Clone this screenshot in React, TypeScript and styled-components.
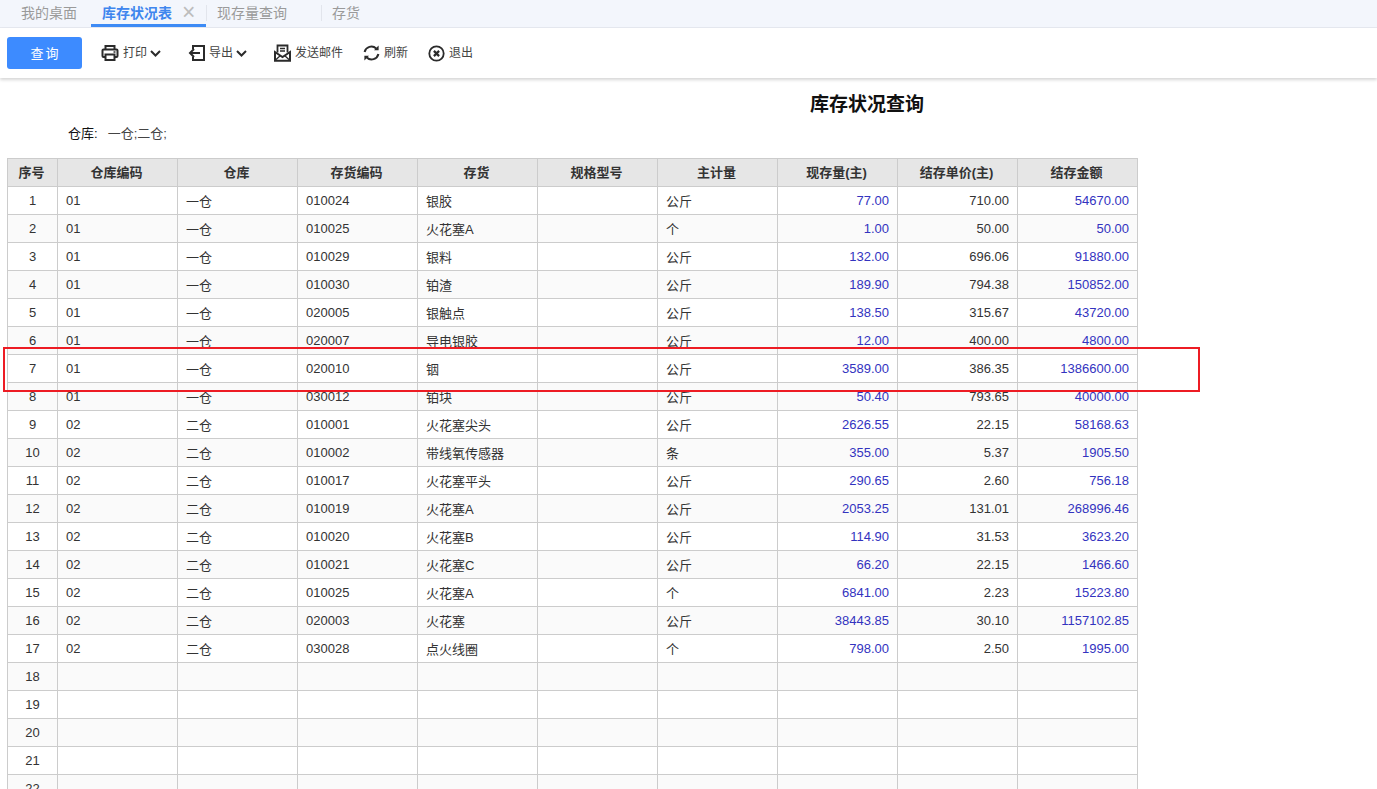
import React from "react";
import styled, { createGlobalStyle } from "styled-components";

const GlobalStyle = createGlobalStyle`
  html, body {
    margin: 0;
    padding: 0;
    height: 789px;
    overflow: hidden;
    background: #ffffff;
    font-family: "Liberation Sans", "Noto Sans CJK SC", sans-serif;
  }
`;

const columns = ["序号", "仓库编码", "仓库", "存货编码", "存货", "规格型号", "主计量", "现存量(主)", "结存单价(主)", "结存金额"];

const rows = [
  ["01", "一仓", "010024", "银胶", "公斤", "77.00", "710.00", "54670.00"],
  ["01", "一仓", "010025", "火花塞A", "个", "1.00", "50.00", "50.00"],
  ["01", "一仓", "010029", "银料", "公斤", "132.00", "696.06", "91880.00"],
  ["01", "一仓", "010030", "铂渣", "公斤", "189.90", "794.38", "150852.00"],
  ["01", "一仓", "020005", "银触点", "公斤", "138.50", "315.67", "43720.00"],
  ["01", "一仓", "020007", "导电银胶", "公斤", "12.00", "400.00", "4800.00"],
  ["01", "一仓", "020010", "铟", "公斤", "3589.00", "386.35", "1386600.00"],
  ["01", "一仓", "030012", "铂块", "公斤", "50.40", "793.65", "40000.00"],
  ["02", "二仓", "010001", "火花塞尖头", "公斤", "2626.55", "22.15", "58168.63"],
  ["02", "二仓", "010002", "带线氧传感器", "条", "355.00", "5.37", "1905.50"],
  ["02", "二仓", "010017", "火花塞平头", "公斤", "290.65", "2.60", "756.18"],
  ["02", "二仓", "010019", "火花塞A", "公斤", "2053.25", "131.01", "268996.46"],
  ["02", "二仓", "010020", "火花塞B", "公斤", "114.90", "31.53", "3623.20"],
  ["02", "二仓", "010021", "火花塞C", "公斤", "66.20", "22.15", "1466.60"],
  ["02", "二仓", "010025", "火花塞A", "个", "6841.00", "2.23", "15223.80"],
  ["02", "二仓", "020003", "火花塞", "公斤", "38443.85", "30.10", "1157102.85"],
  ["02", "二仓", "030028", "点火线圈", "个", "798.00", "2.50", "1995.00"],
];

const PrintIcon = () => (
  <svg width="18" height="18" viewBox="0 0 18 18" fill="none" stroke="#2b2b2b" strokeWidth="2">
    <path d="M4.5 5V2h9v3" />
    <path d="M4 13H2.5a1 1 0 0 1-1-1V6.5a1 1 0 0 1 1-1h13a1 1 0 0 1 1 1V12a1 1 0 0 1-1 1H14" />
    <path d="M4.5 10.5h9V16h-9z" />
    <path d="M12.5 8h2" strokeWidth="1.5" />
  </svg>
);

const ExportIcon = () => (
  <svg width="18" height="18" viewBox="0 0 18 18" fill="none" stroke="#2b2b2b" strokeWidth="2">
    <path d="M5 5V2h11v14H5v-3" />
    <path d="M12 9H2" />
    <path d="M6 5L2 9l4 4" />
  </svg>
);

const MailIcon = () => (
  <svg width="17" height="18" viewBox="0 0 17 18" fill="none" stroke="#2b2b2b" strokeWidth="2">
    <path d="M3.5 8.5V1.5h10v7" strokeWidth="1.8" />
    <path d="M6 4.5h5M6 7h5" strokeWidth="1.3" />
    <path d="M1 8v8.8h15V8l-7.5 5z" />
    <path d="M1.5 16l5-4.5M15.5 16l-5-4.5" strokeWidth="1.3" />
  </svg>
);

const RefreshIcon = () => (
  <svg width="17" height="18" viewBox="0 0 17 18" fill="none" stroke="#2b2b2b" strokeWidth="2">
    <path d="M1.6 8a7 7 0 0 1 11.6-3.6" />
    <path d="M15.4 10a7 7 0 0 1-11.6 3.6" />
    <path d="M15.6 1.6v4.6H11z" fill="#2b2b2b" stroke="none" />
    <path d="M1.4 16.4v-4.6H6z" fill="#2b2b2b" stroke="none" />
  </svg>
);

const ExitIcon = () => (
  <svg width="17" height="17" viewBox="0 0 17 17" fill="none" stroke="#2b2b2b">
    <circle cx="8.5" cy="8.5" r="7.2" strokeWidth="1.8" />
    <path d="M5.9 5.9l5.2 5.2M11.1 5.9l-5.2 5.2" strokeWidth="2.2" />
  </svg>
);

const Chevron = () => (
  <svg width="11" height="7" viewBox="0 0 11 7" fill="none" stroke="#2b2b2b" strokeWidth="2">
    <path d="M1 1l4.5 4.5L10 1" />
  </svg>
);

function App() {
  return (
    <Page>
      <GlobalStyle />
      <TabBar>
        <Tab $width={91}>我的桌面</Tab>
        <Tab $width={115} $active>
          库存状况表
          <CloseMark>×</CloseMark>
        </Tab>
        <Tab $width={115} $divider>现存量查询</Tab>
        <Tab $width={60} $divider>存货</Tab>
      </TabBar>
      <Toolbar>
        <QueryButton>查询</QueryButton>
        <ToolItem $width={87}>
          <PrintIcon />
          <ToolLabel>打印</ToolLabel>
          <Chevron />
        </ToolItem>
        <ToolItem $width={86}>
          <ExportIcon />
          <ToolLabel $tight>导出</ToolLabel>
          <Chevron />
        </ToolItem>
        <ToolItem $width={89}>
          <MailIcon />
          <ToolLabel>发送邮件</ToolLabel>
        </ToolItem>
        <ToolItem $width={65}>
          <RefreshIcon />
          <ToolLabel>刷新</ToolLabel>
        </ToolItem>
        <ToolItem $width={60}>
          <ExitIcon />
          <ToolLabel>退出</ToolLabel>
        </ToolItem>
      </Toolbar>
      <Title>库存状况查询</Title>
      <Filter>
        <FilterName>仓库:</FilterName>
        <span>一仓;二仓;</span>
      </Filter>
      <TableWrap>
        <Grid>
          <colgroup>
            {columns.map((c, i) => (
              <col key={c} width={i === 0 ? 50 : 120} />
            ))}
          </colgroup>
          <thead>
            <tr>
              {columns.map((c) => (
                <HeadCell key={c}>{c}</HeadCell>
              ))}
            </tr>
          </thead>
          <tbody>
            {rows.map((r, i) => (
              <Row key={i}>
                <IndexCell>{i + 1}</IndexCell>
                <Cell>{r[0]}</Cell>
                <Cell>{r[1]}</Cell>
                <Cell>{r[2]}</Cell>
                <Cell>{r[3]}</Cell>
                <Cell />
                <Cell>{r[4]}</Cell>
                <NumCell $blue>{r[5]}</NumCell>
                <NumCell>{r[6]}</NumCell>
                <NumCell $blue>{r[7]}</NumCell>
              </Row>
            ))}
            {[18, 19, 20, 21, 22].map((n) => (
              <Row key={n}>
                <IndexCell>{n}</IndexCell>
                {Array.from({ length: 9 }).map((_, i) => (
                  <Cell key={i} />
                ))}
              </Row>
            ))}
          </tbody>
        </Grid>
      </TableWrap>
      <RedMark />
    </Page>
  );
}

const Page = styled.div`
  position: relative;
  width: 1377px;
  height: 789px;
  overflow: hidden;
  background: #ffffff;
`;

const TabBar = styled.div`
  display: flex;
  height: 27px;
  background: #f3f6fc;
  border-bottom: 1px solid #e6e9f0;
`;

const Tab = styled.div<{ $width: number; $active?: boolean; $divider?: boolean }>`
  position: relative;
  box-sizing: border-box;
  width: ${(p) => p.$width}px;
  height: 27px;
  padding-left: ${(p) => (p.$active || p.$divider ? 11 : 21)}px;
  line-height: 26px;
  font-size: 14px;
  font-weight: ${(p) => (p.$active ? 700 : 400)};
  color: ${(p) => (p.$active ? "#3f86ee" : "#9a9a9a")};
  border-bottom: 3px solid ${(p) => (p.$active ? "#3d8bf5" : "transparent")};
  white-space: nowrap;

  &::before {
    content: "";
    display: ${(p) => (p.$divider ? "block" : "none")};
    position: absolute;
    left: 0;
    top: 5px;
    width: 1px;
    height: 16px;
    background: #e2e5ec;
  }
`;

const CloseMark = styled.span`
  margin-left: 10px;
  font-size: 23px;
  line-height: 20px;
  font-weight: 400;
  color: #bdbdbd;
  vertical-align: -2px;
`;

const Toolbar = styled.div`
  display: flex;
  align-items: center;
  box-sizing: border-box;
  height: 50px;
  padding: 0 0 0 7px;
  background: #ffffff;
  box-shadow: 0 2px 3px rgba(0, 0, 0, 0.16);
`;

const QueryButton = styled.button`
  width: 75px;
  height: 32px;
  margin-right: 19px;
  padding: 0 0 2px 2px;
  border: none;
  border-radius: 3px;
  background: #3d8bff;
  color: #ffffff;
  font-family: inherit;
  font-size: 13px;
  letter-spacing: 2px;
`;

const ToolItem = styled.div<{ $width: number }>`
  display: flex;
  align-items: center;
  gap: 3px;
  width: ${(p) => p.$width}px;
  flex: none;
`;

const ToolLabel = styled.span<{ $tight?: boolean }>`
  margin-left: ${(p) => (p.$tight ? 0 : 1)}px;
  padding-bottom: 3px;
  font-size: 12px;
  color: #444444;
  white-space: nowrap;
`;

const Title = styled.h1`
  margin: 15px 0 0;
  padding-left: 810px;
  font-size: 19px;
  line-height: 24px;
  font-weight: 700;
  color: #111111;
`;

const Filter = styled.div`
  display: flex;
  gap: 10px;
  margin-top: 9px;
  padding-left: 68px;
  font-size: 13px;
  line-height: 16px;
  color: #444444;
`;

const FilterName = styled.span`
  color: #111111;
`;

const TableWrap = styled.div`
  margin-top: 16px;
  padding-left: 7px;
`;

const Grid = styled.table`
  table-layout: fixed;
  width: 1130px;
  border-collapse: collapse;
  font-size: 13px;
  color: #333333;
`;

const HeadCell = styled.th`
  box-sizing: border-box;
  height: 28px;
  padding: 0 2px 3px 0;
  background: #e6e6e6;
  border: 1px solid #cccccc;
  font-weight: 700;
  color: #333333;
`;

const Row = styled.tr`
  height: 28px;
  &:nth-child(even) td {
    background: #fafafa;
  }
`;

const Cell = styled.td`
  box-sizing: border-box;
  height: 28px;
  padding: 0 8px;
  border: 1px solid #cccccc;
  white-space: nowrap;
`;

const IndexCell = styled(Cell)`
  padding: 0;
  text-align: center;
`;

const NumCell = styled(Cell)<{ $blue?: boolean }>`
  text-align: right;
  color: ${(p) => (p.$blue ? "#3333bf" : "#333333")};
`;

const RedMark = styled.div`
  position: absolute;
  left: 3px;
  top: 347px;
  box-sizing: border-box;
  width: 1197px;
  height: 45px;
  border: 2px solid #ed1c24;
`;

export default App;
